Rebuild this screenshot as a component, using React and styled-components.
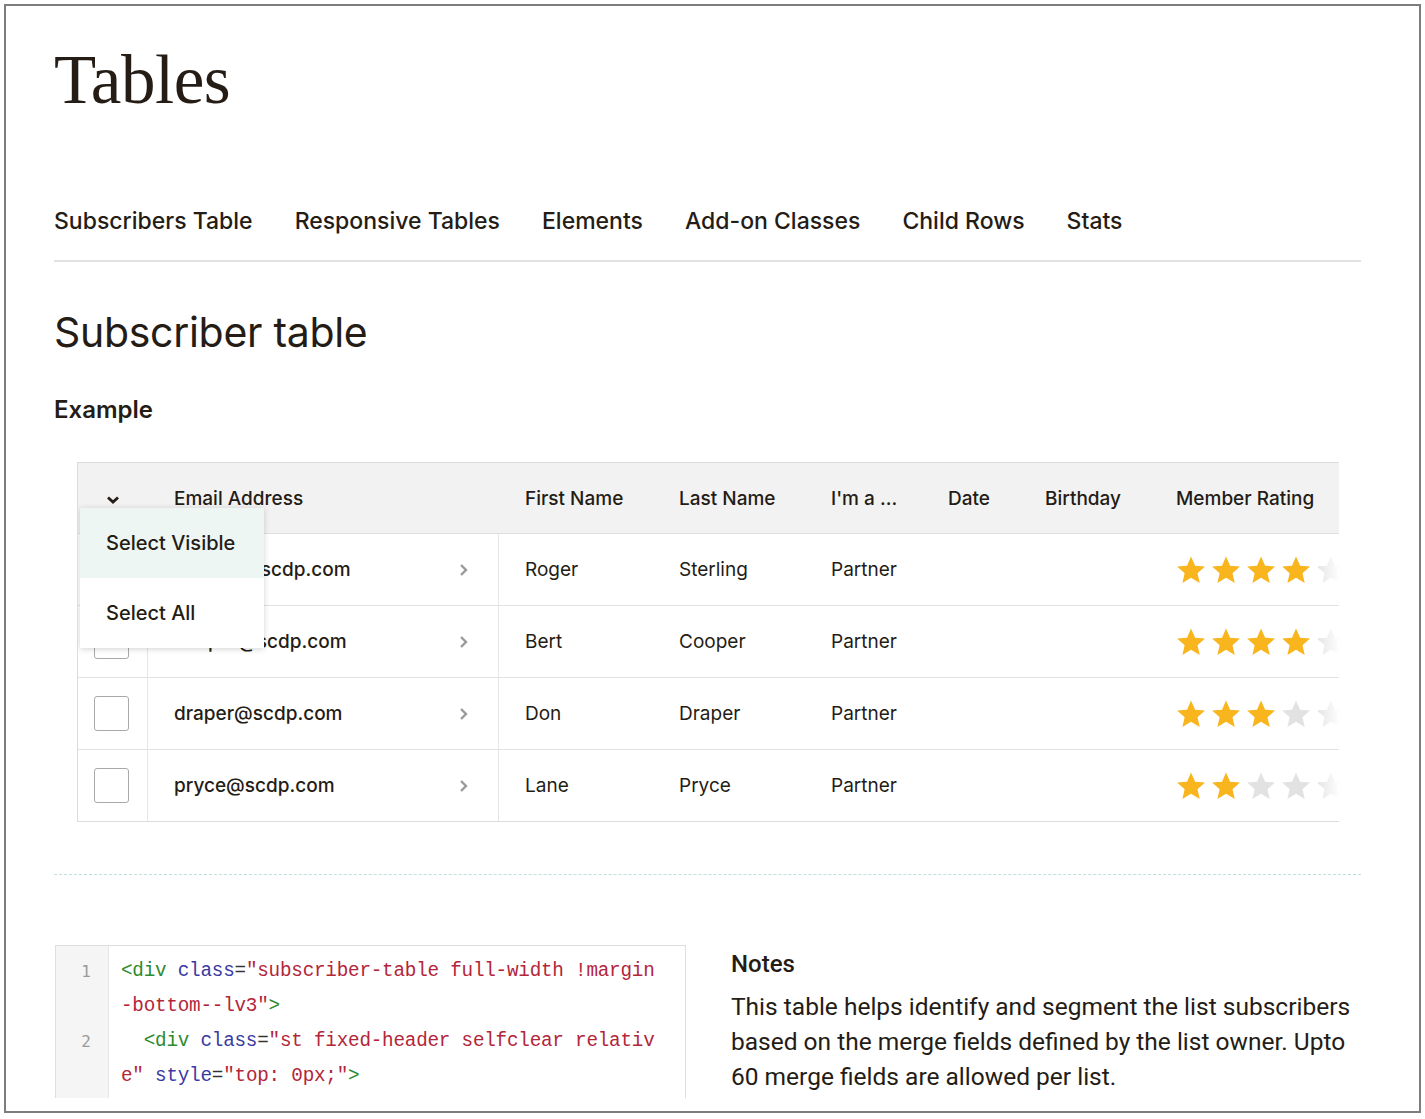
import React from 'react';
import styled, { createGlobalStyle } from 'styled-components';

const GlobalStyle = createGlobalStyle`
  html, body {
    margin: 0;
    padding: 0;
    background: #fff;
  }
  body {
    font-family: Inter, "Liberation Sans", Arial, sans-serif;
    color: #241c15;
  }
`;

const Frame = styled.div`
  margin: 4px;
  height: 1109px;
  border: 2px solid #7d7d7d;
  box-sizing: border-box;
`;

// the captured page stops a little above the frame's bottom edge
const Viewport = styled.div`
  height: 1092px;
  overflow: hidden;
  padding: 0 58px 0 48px;
`;

const PageTitle = styled.h1`
  margin: 29px 0 0;
  font-family: "Liberation Serif", "Times New Roman", serif;
  font-weight: 400;
  font-size: 69px;
  line-height: 90px;
  letter-spacing: -0.5px;
`;

const Tabs = styled.nav`
  display: flex;
  gap: 42px;
  margin-top: 82px;
  padding-bottom: 25px;
  border-bottom: 2px solid #e2e2e2;
`;

const Tab = styled.a`
  font-size: 23px;
  font-weight: 500;
  line-height: 28px;
  color: #241c15;
  text-decoration: none;
`;

const SectionTitle = styled.h2`
  margin: 42px 0 0;
  font-size: 41px;
  font-weight: 400;
  line-height: 56px;
  letter-spacing: -0.3px;
`;

const SubTitle = styled.h3`
  margin: 35px 0 0;
  font-size: 24px;
  font-weight: 600;
  line-height: 30px;
`;

const TableWrap = styled.div`
  position: relative;
  margin: 37px 22px 0 23px;
  border: 1px solid #dcdcdc;
  border-right: none;
  overflow: hidden;
`;

const cols = '70px 351px 154px 152px 117px 97px 131px 1fr';

const HeadRow = styled.div`
  display: grid;
  grid-template-columns: ${cols};
  height: 70px;
  align-items: center;
  background: #f2f2f2;
  border-bottom: 1px solid #e0e0e0;
`;

const HeadCell = styled.div`
  padding-left: ${({ $pad }) => $pad || 26}px;
  font-size: 19px;
  font-weight: 500;
  white-space: nowrap;
`;

const Row = styled.div`
  display: grid;
  grid-template-columns: ${cols};
  height: 71px;
  border-top: ${({ $first }) => ($first ? 'none' : '1px solid #e2e2e2')};
`;

const Cell = styled.div`
  display: flex;
  align-items: center;
  padding-left: 26px;
  font-size: 19px;
  font-weight: ${({ $strong }) => ($strong ? 500 : 400)};
  white-space: nowrap;
  border-right: ${({ $line }) => ($line ? '1px solid #e6e6e6' : 'none')};
  justify-content: ${({ $between }) => ($between ? 'space-between' : 'flex-start')};
  padding-right: ${({ $between }) => ($between ? '28px' : '0')};
`;

const CheckCell = styled.div`
  display: flex;
  align-items: center;
  padding-left: 16px;
  border-right: 1px solid #e6e6e6;
`;

const Checkbox = styled.span`
  width: 33px;
  height: 33px;
  border: 1px solid #a9a9a9;
  border-radius: 3px;
  background: #fff;
`;

const Stars = styled.div`
  display: flex;
  align-items: center;
  gap: 5px;
  padding-left: 26px;
  position: relative;
  &::after {
    content: '';
    position: absolute;
    top: 0;
    bottom: 0;
    right: 0;
    width: 26px;
    background: linear-gradient(to right, rgba(255, 255, 255, 0.2), #fff 75%);
  }
`;

const Menu = styled.div`
  position: absolute;
  left: 2px;
  top: 45px;
  width: 184px;
  background: #fff;
  box-shadow: 0 1px 6px rgba(0, 0, 0, 0.18);
  z-index: 2;
`;

const MenuItem = styled.div`
  height: 70px;
  display: flex;
  align-items: center;
  padding-left: 26px;
  font-size: 20px;
  font-weight: 500;
  background: ${({ $active }) => ($active ? '#eef6f4' : '#fff')};
`;

const Divider = styled.hr`
  margin: 52px 0 0;
  border: none;
  border-top: 1px dashed #bfe0e0;
`;

const Bottom = styled.div`
  display: grid;
  grid-template-columns: 631px 1fr;
  gap: 45px;
  margin-top: 70px;
  padding-left: 1px;
`;

const CodeBox = styled.div`
  border: 1px solid #dedede;
  padding-top: 8px;
  padding-bottom: 40px;
  background: linear-gradient(to right, #f5f5f5 52px, #e6e6e6 52px, #e6e6e6 53px, #fff 53px);
`;

const CodeLine = styled.div`
  display: grid;
  grid-template-columns: 52px 1fr;
  line-height: 35px;
`;

const LineNo = styled.div`
  color: #9a9a9a;
  font-family: "DejaVu Sans Mono", "Liberation Mono", monospace;
  font-size: 16px;
  text-align: right;
  padding-right: 17px;
`;

const CodeText = styled.pre`
  margin: 0;
  padding-left: 13px;
  font-family: "Liberation Mono", "DejaVu Sans Mono", monospace;
  font-size: 19.3px;
  letter-spacing: -0.22px;
  line-height: 35px;
  white-space: pre;
  color: #333;
`;

const Tag = styled.span`
  color: #2e8b2e;
`;
const Attr = styled.span`
  color: #3a3aa3;
`;
const Str = styled.span`
  color: #b3263a;
`;

const Notes = styled.div`
  padding-top: 4px;
`;

const NotesTitle = styled.div`
  font-family: Roboto, "Liberation Sans", sans-serif;
  font-size: 24px;
  font-weight: 500;
  line-height: 30px;
`;

const NotesText = styled.p`
  margin: 10px 0 0;
  font-family: Roboto, "Liberation Sans", sans-serif;
  font-size: 24.5px;
  line-height: 35px;
  color: #241c15;
`;

const Star = ({ on }) => (
  <svg width="30" height="30" viewBox="0 0 24 24">
    <path
      d="M12 1.2l3.3 7.3 7.9.7-6 5.3 1.8 7.8L12 18.2l-6.9 4.1 1.8-7.8-6-5.3 7.9-.7z"
      fill={on ? '#f9b51e' : '#e2e2e2'}
    />
  </svg>
);

const Chevron = () => (
  <svg width="12" height="16" viewBox="0 0 12 16">
    <path d="M3 3l5 5-5 5" fill="none" stroke="#9a9a9a" strokeWidth="2.4" />
  </svg>
);

const ChevronDown = () => (
  <svg width="14" height="10" viewBox="0 0 14 10">
    <path d="M2 2.5l5 4.5 5-4.5" fill="none" stroke="#241c15" strokeWidth="2.8" />
  </svg>
);

const people = [
  { email: 'sterling@scdp.com', first: 'Roger', last: 'Sterling', rating: 4 },
  { email: 'cooper@scdp.com', first: 'Bert', last: 'Cooper', rating: 4 },
  { email: 'draper@scdp.com', first: 'Don', last: 'Draper', rating: 3 },
  { email: 'pryce@scdp.com', first: 'Lane', last: 'Pryce', rating: 2 },
];

const tabs = ['Subscribers Table', 'Responsive Tables', 'Elements', 'Add-on Classes', 'Child Rows', 'Stats'];

// the snippet is wrapped by hand at 46 columns, as in the docs page
const codeRows = [
  { n: 1, body: <><Tag>&lt;div</Tag> <Attr>class</Attr>=<Str>"subscriber-table full-width !margin</Str></> },
  { body: <><Str>-bottom--lv3"</Str><Tag>&gt;</Tag></> },
  { n: 2, body: <>{'  '}<Tag>&lt;div</Tag> <Attr>class</Attr>=<Str>"st fixed-header selfclear relativ</Str></> },
  { body: <><Str>e"</Str> <Attr>style</Attr>=<Str>"top: 0px;"</Str><Tag>&gt;</Tag></> },
];

const App = () => (
  <>
    <GlobalStyle />
    <Frame>
      <Viewport>
        <PageTitle>Tables</PageTitle>
        <Tabs>
          {tabs.map((t) => <Tab key={t}>{t}</Tab>)}
        </Tabs>
        <SectionTitle>Subscriber table</SectionTitle>
        <SubTitle>Example</SubTitle>

        <TableWrap>
          <HeadRow>
            <HeadCell $pad={28}><ChevronDown /></HeadCell>
            <HeadCell>Email Address</HeadCell>
            <HeadCell>First Name</HeadCell>
            <HeadCell>Last Name</HeadCell>
            <HeadCell>I'm a ...</HeadCell>
            <HeadCell>Date</HeadCell>
            <HeadCell>Birthday</HeadCell>
            <HeadCell>Member Rating</HeadCell>
          </HeadRow>
          {people.map((p, i) => (
            <Row key={p.email} $first={i === 0}>
              <CheckCell><Checkbox /></CheckCell>
              <Cell $strong $line $between>
                {p.email}
                <Chevron />
              </Cell>
              <Cell>{p.first}</Cell>
              <Cell>{p.last}</Cell>
              <Cell>Partner</Cell>
              <Cell />
              <Cell />
              <Stars>
                {[1, 2, 3, 4, 5].map((n) => <Star key={n} on={n <= p.rating} />)}
              </Stars>
            </Row>
          ))}
          <Menu>
            <MenuItem $active>Select Visible</MenuItem>
            <MenuItem>Select All</MenuItem>
          </Menu>
        </TableWrap>

        <Divider />

        <Bottom>
          <CodeBox>
            {codeRows.map((r, i) => (
              <CodeLine key={i}>
                <LineNo>{r.n || ''}</LineNo>
                <CodeText>{r.body}</CodeText>
              </CodeLine>
            ))}
          </CodeBox>
          <Notes>
            <NotesTitle>Notes</NotesTitle>
            <NotesText>
              This table helps identify and segment the list subscribers based on the merge fields defined by the list owner. Upto 60 merge fields are allowed per list.
            </NotesText>
          </Notes>
        </Bottom>
      </Viewport>
    </Frame>
  </>
);

export default App;
